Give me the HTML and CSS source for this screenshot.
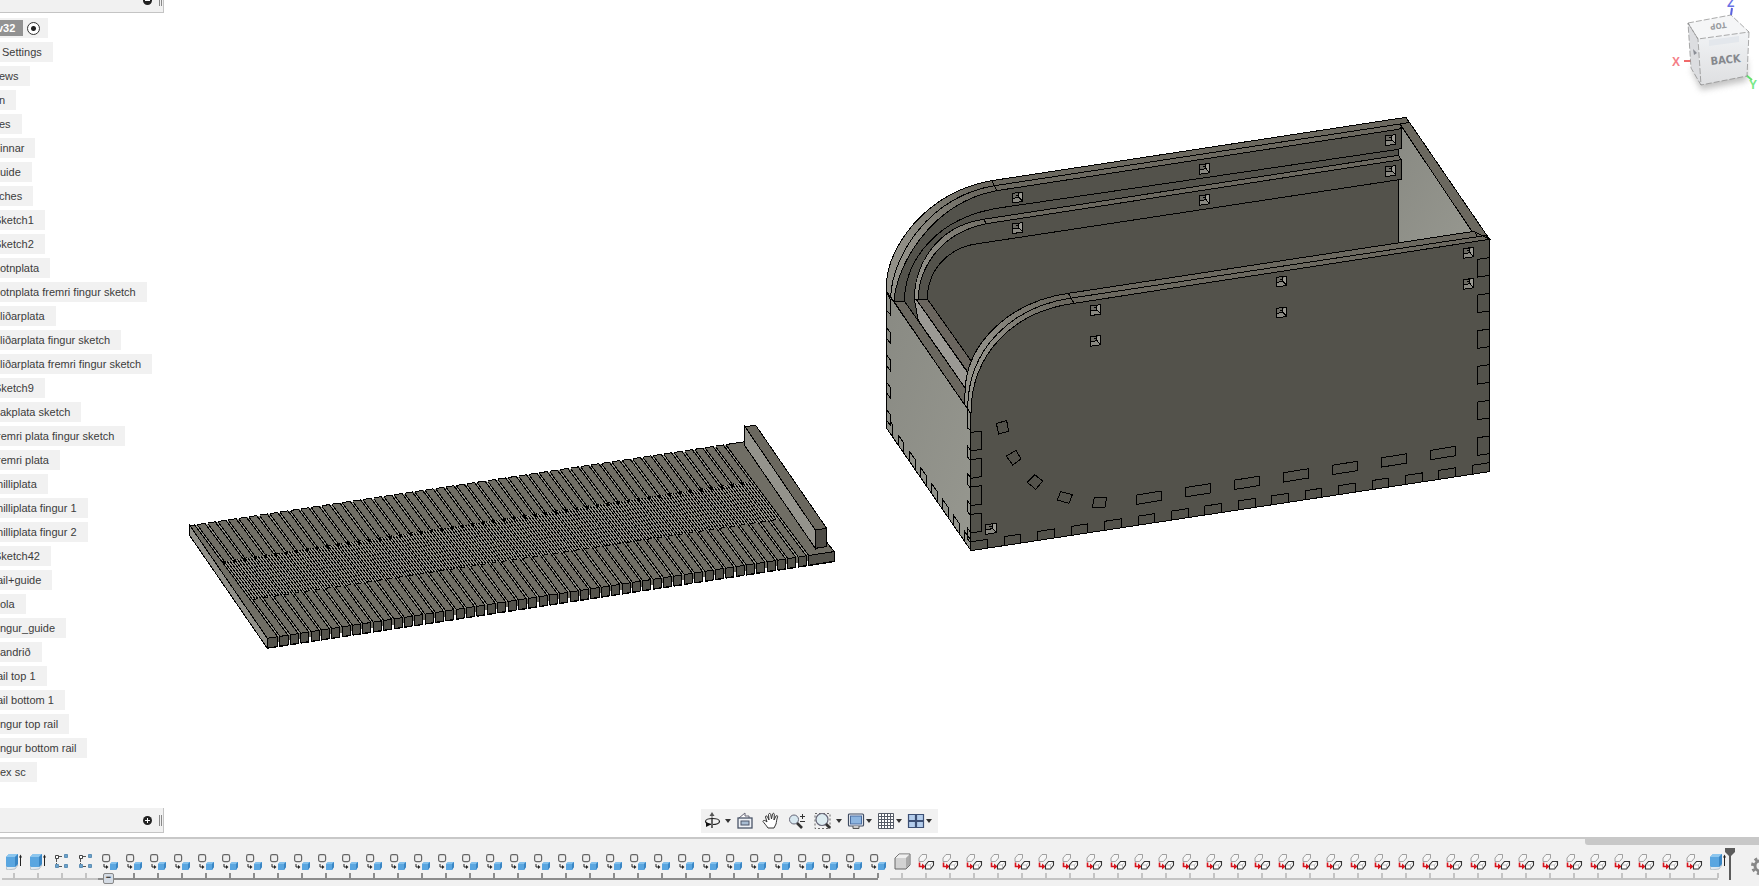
FILE: index.html
```html
<!DOCTYPE html>
<html lang="is">
<head>
<meta charset="utf-8">
<title>v32</title>
<link rel="stylesheet" href="styles.css">
</head>
<body>
<svg class="defs" aria-hidden="true">
  <defs>
    <symbol id="extrude" viewBox="0 0 17 17">
      <path d="M0 14 3 12H12L9 16 1 17Z" fill="#dfe9f0" stroke="#9aa4ac" stroke-width=".6"/>
      <path d="M0 4 3 1H12V11L9 14H1L0 13Z" fill="#5aa6e0"/>
      <path d="M0 4 3 1H12L9 4Z" fill="#8cc6ee"/>
      <path d="M9 4 12 1V11L9 14Z" fill="#3a86c4"/>
      <path d="M14.500 13V3" stroke="#222" fill="none"/><path d="M13 4.500 14.500 1.500 16 4.500Z" fill="#222"/>
    </symbol>
    <symbol id="pattern" viewBox="0 0 17 17">
      <path d="M5 3.500H9M5 13.500H9M2.500 6V11" stroke="#555" stroke-dasharray="3 1" fill="none"/>
      <path d="M1.500 2.500h3v3h-3z" fill="#fff" stroke="#444"/>
      <path d="M10.500 1.500h3v3h-3zM1.500 11.500h3v3h-3zM10.500 11.500h3v3h-3z" fill="#6aa3cc" stroke="#5f8fb5"/>
    </symbol>
    <symbol id="copy" viewBox="0 0 17 17">
      <rect x=".6" y="1.600" width="7" height="7" rx="1.800" fill="#eee" stroke="#666" stroke-width="1.200"/>
      <path d="M2 11V14H5" stroke="#222" fill="none"/><path d="M4 12 6.500 14 4 16Z" fill="#222"/>
      <path d="M8 11 10 9H16V14L14 17H8Z" fill="#5aa6e0"/>
      <path d="M8 11 10 9H16L14 11Z" fill="#82c0ec"/><path d="M14 11 16 9V14L14 17Z" fill="#3a86c4"/>
    </symbol>
    <symbol id="body" viewBox="0 0 17 17">
      <path d="M1 5 5 1H16V12L12 16H1Z" fill="#d2d2d2" stroke="#666" stroke-linejoin="round"/>
      <path d="M1.500 5 5 1.500H15.500L12 5Z" fill="#efefef"/><path d="M12 5 15.500 1.500V12L12 15.500Z" fill="#aaa"/>
    </symbol>
    <symbol id="move" viewBox="0 0 17 17">
      <path d="M1 5 4 1.500H8.500V5L5.500 8.500H1Z" fill="#f6f6f6" stroke="#8a8a8a" stroke-width=".8"/>
      <path d="M1.500 9.500V13.500H5" stroke="#d8141c" stroke-width="1.600" fill="none"/><path d="M4 10.500 7.500 13.500 4 16.500Z" fill="#d8141c"/>
      <path d="M7.500 12 10.500 8.500H15.500V12L12.500 16H7.500Z" fill="#fff" stroke="#333" stroke-width="1.100"/>
      <path d="M8 12H12.500V15.500M12.500 12 15 9" fill="none" stroke="#999" stroke-width=".6"/>
    </symbol>
  </defs>
</svg>

<main class="workspace">
  <svg class="scene" viewBox="0 0 1759 837" role="img" aria-label="Model">
    <defs>
      <linearGradient id="rim" gradientUnits="userSpaceOnUse" x1="50" y1="540" x2="330" y2="280"><stop offset="0" stop-color="#93928a"/><stop offset=".35" stop-color="#8e8c84"/><stop offset="1" stop-color="#6b685f"/></linearGradient>
      <linearGradient id="rim2" gradientUnits="userSpaceOnUse" x1="285" y1="900" x2="560" y2="600"><stop offset="0" stop-color="#93928a"/><stop offset=".45" stop-color="#8e8c84"/><stop offset="1" stop-color="#6b685f"/></linearGradient>
      <linearGradient id="side" x1="0" y1="0" x2="1" y2="1"><stop offset="0" stop-color="#898a83"/><stop offset="1" stop-color="#96978f"/></linearGradient>
      <g id="hole" class="solid">
        <path class="plain" d="M0 4 32 0V28L0 33Z" fill="#6b6a63"/>
        <path class="plain" d="M20 17 32 28V0L22 2Z" fill="#9c9b94"/>
        <path class="plain" d="M1 20 20 17 31 28 1 32Z" fill="#8a8982"/>
        <path fill="none" d="M0 4 32 0V28L0 33ZM1 19 20 16V3M20 16 31 28M10 10H20"/>
      </g>
    </defs>
    <g id="board" class="solid" transform="translate(180 410) scale(.33333)"></g>
    <g id="box" class="solid" transform="translate(870 100) scale(.33333)">
      <path fill="#53524b" d="M50 985V548C52 450 160 278 365 242L1608 52 1858 417V1115L303 1352Z"/>
      <path fill="url(#rim)" d="M50 575V548C52 450 160 278 365 242L1608 52 1616 68 1585 88 380 272C180 310 78 500 72 605Z"/>
      <path fill="none" d="M62 592C66 470 175 290 374 257L1616 68M365 242 380 272"/>
      <path fill="none" d="M72 605 103 603C105 490 190 350 400 322L1585 148M1594 87V145L1585 148V166"/>
      <path fill="url(#rim)" d="M133 598C133 500 195 380 340 358L1585 166 1594 179 350 371C205 400 145 510 145 600Z"/>
      <path fill="none" d="M340 358 350 371M172 598C172 510 235 440 330 430L1594 238V179"/>
      <path fill="url(#side)" d="M1594 87 1596 80 1812 398 1585 431V240L1594 238V179L1585 166V148L1594 145Z"/>
      <path fill="#6b685f" d="M1608 52 1858 417 1845 406 1815 408 1590 72 1616 68Z"/>
      <path fill="#6a675f" d="M72 605 103 603 288 868 290 925Z"/>
      <path fill="#9b9994" d="M133 598 145 662 288 868 303 832 140 600Z"/>
      <path fill="#6b665f" d="M140 600 172 597 312 795 303 830Z"/>
      <path fill="url(#side)" d="M50 575 303 942V1352L50 985Z"/>
      <path fill="url(#rim2)" d="M285 915V880C285 730 420 605 595 580L1812 394 1858 418 612 610C430 635 303 760 303 942Z"/>
      <path fill="#53524b" d="M303 942C303 760 430 635 612 610L1858 418V1115L303 1352Z"/>
      <path fill="none" d="M293 928C293 745 425 620 605 594L1850 406M595 580 612 610M1815 395 1822 410"/>
      <path fill="none" d="M379 970 410 962 416 994 386 1002ZM409 1068 438 1051 453 1077 428 1095ZM472 1147 494 1124 518 1143 497 1168ZM572 1175 607 1184 597 1210 562 1200ZM673 1192 710 1192 705 1222 667 1222Z"/>
      <path fill="none" d="M50 576 62 600V645L50 632M292 930V985L303 990M303 1325 353 1318V1344"/>
    </g>
  </svg>

  <aside class="browser">
    <header class="panel-bar panel-head">
      <button class="round" aria-label="Collapse"><svg viewBox="0 0 9 9"><circle cx="4.500" cy="4.500" r="4.500" fill="#222"/><path d="M2 4.500H7" stroke="#fff"/></svg></button><span class="grip"></span>
    </header>
    <ul class="tree">
      <li class="root"><b>v32</b><label><input type="radio" checked aria-label="v32"></label></li>
      <li class="in">Settings</li>
      <li class="cut">ews</li>
      <li class="cut">n</li>
      <li class="cut">es</li>
      <li>innar</li>
      <li>uide</li>
      <li class="cut">ches</li>
      <li class="deep">Sketch1</li>
      <li class="deep">Sketch2</li>
      <li>otnplata</li>
      <li>otnplata fremri fingur sketch</li>
      <li>liðarplata</li>
      <li>liðarplata fingur sketch</li>
      <li>liðarplata fremri fingur sketch</li>
      <li class="deep">Sketch9</li>
      <li>akplata sketch</li>
      <li class="mid">remri plata fingur sketch</li>
      <li class="mid">remri plata</li>
      <li class="deep">milliplata</li>
      <li class="deep">milliplata fingur 1</li>
      <li class="deep">milliplata fingur 2</li>
      <li class="deep">Sketch42</li>
      <li class="mid">ail+guide</li>
      <li>ola</li>
      <li>ngur_guide</li>
      <li>andrið</li>
      <li class="mid">ail top 1</li>
      <li class="mid">ail bottom 1</li>
      <li>ngur top rail</li>
      <li>ngur bottom rail</li>
      <li>ex sc</li>
    </ul>
    <footer class="panel-bar panel-foot">
      <button class="round" aria-label="Expand"><svg viewBox="0 0 9 9"><circle cx="4.500" cy="4.500" r="4.500" fill="#222"/><path d="M2 4.500H7M4.500 2V7" stroke="#fff"/></svg></button><span class="grip"></span>
    </footer>
  </aside>

  <svg class="cube" viewBox="0 0 100 100" role="img" aria-label="View cube">
    <defs><filter id="soft" x="-30%" y="-30%" width="160%" height="160%"><feGaussianBlur stdDeviation="3"/></filter>
    <linearGradient id="face" x1="0" y1="0" x2="0" y2="1"><stop offset="0" stop-color="#f1f3f5"/><stop offset="1" stop-color="#dedfe1"/></linearGradient></defs>
    <path d="M32 68 42 90 88 81 88 60Z" fill="#999" opacity=".6" filter="url(#soft)"/>
    <path d="M72 15 73 8" stroke="#5a62e0" stroke-width="2"/><path d="M25 61H33" stroke="#f06a6a" stroke-width="2"/><path d="M87 75 93 80" stroke="#60e070" stroke-width="2"/>
    <path d="M29 23 39 39 42 85 32 68Z" fill="#dcdde0"/><path d="M29 23 72 15 90 32 39 39Z" fill="#f5f6f7"/>
    <path d="M39 39 90 32 88 76 42 85Z" fill="url(#face)"/><path d="M50 40 80 36V42L50 46Z" fill="#e3e7ec"/>
    <path d="M29 23 39 39 42 85 32 68ZM29 23 72 15 90 32 39 39ZM90 32 88 76 42 85" fill="none" stroke="#888" stroke-width=".7" stroke-dasharray="6 2"/>
    <path d="M34 49 38 53 35 55Z" fill="#8a8d95"/>
    <text class="face-name" x="52" y="65" transform="rotate(-6 52 65)">BACK</text>
    <text class="top-name" x="67" y="22" transform="rotate(172 67 22)">TOP</text>
    <text class="axis axis-x" x="13" y="66">X</text><text class="axis axis-y" x="90" y="89">Y</text><text class="axis axis-z" x="68" y="7">Z</text>
  </svg>

  <nav class="views" aria-label="View">
    <div class="tool caret-gap"><button aria-label="Orbit"><svg viewBox="0 0 18 18"><path d="M9 16V3" stroke="#666"/><path d="M6.500 4 9 0 11.500 4Z" fill="#555"/><ellipse cx="9.500" cy="9.500" rx="7" ry="3" fill="none" stroke="#222" stroke-width="1.200"/><path d="M8 12.500 3 10V15Z" fill="#111"/><path d="M9 7V16" stroke="#666" stroke-width="2"/></svg></button><button class="more" aria-label="Orbit options"></button></div>
    <div class="tool"><button class="solo" aria-label="Look at"><svg viewBox="0 0 18 18"><path d="M3 6 9 1V4H13V6" fill="#fff" stroke="#667"/><rect x="2" y="6" width="14" height="10" fill="#eef1f6" stroke="#4b5568" stroke-width="1.300"/><rect x="5" y="9" width="8" height="4" fill="#a8bcd2" stroke="#4b5568"/></svg></button></div>
    <div class="tool"><button class="solo" aria-label="Pan"><svg viewBox="0 0 18 18"><path d="M6 16C4 13 2 11 1 9.500 1 8 3 8 5 10L3.500 5C3.500 3.500 5 3.500 5.500 5L7 8 6.500 2.500C7 1 8.500 1.200 8.700 2.500L9.500 7 10.500 2C11 .8 12.500 1.200 12.300 2.600L12 8 14 4C15 3 16 4 15.500 5 14.500 8 14.500 10 14 12L12 16Z" fill="#fff" stroke="#333"/></svg></button></div>
    <div class="tool"><button class="solo" aria-label="Zoom"><svg viewBox="0 0 18 18"><circle cx="6" cy="7.500" r="4.500" fill="#d8e8f0" stroke="#667"/><path d="M9 11 14 16" stroke="#333" stroke-width="2.600"/><path d="M12 4.500H17M14.500 2V7M12 9.500H17" stroke="#333"/></svg></button></div>
    <div class="tool caret-gap"><button aria-label="Fit"><svg viewBox="0 0 18 18"><rect x="1" y="1.500" width="15" height="15" fill="none" stroke="#666" stroke-dasharray="2 2"/><circle cx="8" cy="7.500" r="6" fill="#dcebf0" stroke="#667" stroke-width="1.200"/><path d="M12 12 16 16" stroke="#333" stroke-width="2.800"/></svg></button><button class="more" aria-label="Fit options"></button></div>
    <div class="tool"><button aria-label="Display settings"><svg viewBox="0 0 18 18"><rect x="1.500" y="2" width="15" height="12" rx="1" fill="#f2f5fa" stroke="#3f4b60" stroke-width="1.200"/><rect x="3.500" y="4" width="11" height="8" fill="#8db5e0" stroke="#4a6da0"/><path d="M6 14V16.500H12V14" fill="#ccc" stroke="#555"/></svg></button><button class="more" aria-label="Display options"></button></div>
    <div class="tool"><button aria-label="Grid"><svg viewBox="0 0 18 18"><path d="M1.500 1.500H16.500V16.500H1.500ZM4.500 1.500V16.500M7.500 1.500V16.500M10.500 1.500V16.500M13.500 1.500V16.500M1.500 4.500H16.500M1.500 7.500H16.500M1.500 10.500H16.500M1.500 13.500H16.500" fill="#fff" stroke="#555b66"/></svg></button><button class="more" aria-label="Grid options"></button></div>
    <div class="tool"><button aria-label="Viewports"><svg viewBox="0 0 18 18"><path d="M1.500 2.500h7v6h-7zM9.500 2.500h7v6h-7zM1.500 9.500h7v6h-7zM9.500 9.500h7v6h-7z" fill="#b4cdec" stroke="#3c4f74" stroke-width="1.200"/></svg></button><button class="more" aria-label="Viewport options"></button></div>
  </nav>
</main>

<footer class="timeline">
  <div class="scroll-thumb"></div>
  <ol class="history" id="history"></ol>
</footer>
<script src="scene.js"></script>
</body>
</html>
```
FILE: styles.css
```css
* { box-sizing: border-box; }

body {
  margin: 0;
  height: 100vh;
  display: flex;
  flex-direction: column;
  overflow: hidden;
  background: #fff;
  color: #3c3c3c;
  font: 11px/20px "Liberation Sans", Arial, sans-serif;
}

button {
  appearance: none;
  border: 0;
  padding: 0;
  background: none;
  display: block;
  flex: none;
}

svg { display: block; }
.defs { position: absolute; width: 0; height: 0; }

.workspace {
  position: relative;
  flex: 1;
  min-height: 0;
  display: flex;
  justify-content: space-between;
}

.scene {
  position: absolute;
  inset: 0;
  width: 100%;
  height: 100%;
}

.solid path {
  stroke: #000;
  stroke-width: 1px;
  vector-effect: non-scaling-stroke;
  shape-rendering: crispEdges;
}
.solid .plain { stroke: none; }

.browser {
  position: relative;
  width: 164px;
  display: flex;
  flex-direction: column;
  padding-bottom: 4px;
}

.panel-bar {
  display: flex;
  align-items: center;
  justify-content: flex-end;
  gap: 7px;
  padding-right: 1px;
  background: #f1f1f1;
  border: solid #c4c4c4;
  border-width: 0 1px 1px 0;
}
.panel-head { height: 13px; align-items: flex-start; overflow: hidden; }
.panel-head .round { margin-top: -4px; }
.panel-head .grip { height: 6px; }
.panel-foot { height: 25px; margin-top: auto; }
.round { width: 9px; height: 9px; }
.grip { width: 3px; height: 11px; border: solid #888; border-width: 0 1px; }

.tree {
  list-style: none;
  margin: 0;
  padding: 5px 0 0;
  display: flex;
  flex-direction: column;
  align-items: flex-start;
  gap: 4px;
}
.tree li {
  height: 20px;
  padding-right: 11px;
  background: #f1f1f1;
  white-space: nowrap;
}
.tree .in { text-indent: 2px; }
.tree .cut { text-indent: -1px; }
.tree .mid { text-indent: -3px; }
.tree .deep { text-indent: -6px; }
.tree .root { display: flex; align-items: center; gap: 4px; padding-right: 8px; text-indent: -3px; }
.root b { background: #929292; color: #fff; line-height: 16px; padding-right: 8px; }
.root label { display: flex; }
.root input {
  appearance: none;
  margin: 0;
  width: 13px;
  height: 13px;
  border: 1px solid #333;
  border-radius: 50%;
  background: radial-gradient(circle, #222 2px, #fff 3px);
}

.cube { position: relative; width: 100px; height: 100px; overflow: hidden; }
.face-name { font: bold 11px "Liberation Sans Narrow", "DejaVu Sans Condensed", sans-serif; fill: #85888d; }
.top-name { font: bold 8px "Liberation Sans Narrow", "DejaVu Sans Condensed", sans-serif; fill: #9a9da2; }
.axis { font: bold 12px "Liberation Sans", sans-serif; }
.axis-x { fill: #f58088; }
.axis-y { fill: #78e888; }
.axis-z { fill: #6a72e4; }

.views {
  position: absolute;
  bottom: 4px;
  left: 0;
  right: 121px;
  width: max-content;
  margin: 0 auto;
  height: 24px;
  padding: 0 5px 0 2px;
  display: flex;
  align-items: center;
  gap: 4px;
  background: #f1f1f1;
}
.tool { display: flex; align-items: center; }
.tool svg { width: 18px; height: 18px; }
.solo { padding-right: 4px; }
.caret-gap { gap: 3px; }
.more { width: 8px; height: 18px; display: flex; align-items: center; justify-content: center; }
.more::before { content: ""; border: 3px solid transparent; border-top: 4px solid #333; border-bottom: 0; }

.timeline {
  flex: none;
  height: 49px;
  border-top: 2px solid #c8c8c8;
  background: #f1f1f1;
  overflow: hidden;
}
.scroll-thumb { width: 174px; max-width: 20%; height: 6px; margin-left: auto; background: #c8c8c8; border-bottom-left-radius: 3px; }

.history { list-style: none; display: flex; margin: 0; padding: 8px 0 0 2px; }
.step {
  --rail: #c4c4c4;
  flex: none;
  width: 24px;
  height: 27px;
  display: flex;
  flex-direction: column;
  align-items: center;
  gap: 3px;
  background: linear-gradient(var(--rail), var(--rail)) left bottom / 100% 2px no-repeat;
}
.step svg { width: 17px; height: 17px; }
.step::after { content: ""; width: 2px; height: 5px; background: var(--rail); }
.step.grouped { --rail: #8c8c8c; }
.step.end { background-size: 50% 2px; }
.step.toggle::after { content: "−"; width: 9px; height: 9px; flex: none; margin-right: 3px; border: 1px solid #888; border-radius: 2px; background: #d4dbe4; color: #111; font: bold 9px/7px "Liberation Sans", sans-serif; text-align: center; }
.marker { flex: none; width: 12px; height: 33px; margin: -6px 0 0 -6px; position: relative; }
.gear { margin: 4px 0 0 15px; }
.gear svg { width: 18px; height: 18px; }
```
FILE: scene.js
```js
const SVG = 'http://www.w3.org/2000/svg';
const board = document.getElementById('board');
const box = document.getElementById('box');

function draw(parent, d, fill = 'none', cls) {
  const p = document.createElementNS(SVG, 'path');
  p.setAttribute('d', d);
  p.setAttribute('fill', fill);
  if (cls) p.setAttribute('class', cls);
  parent.append(p);
}

/* Slatted lid */
const SLATS = 52, PITCH = 31.1;
const back = x => 347 - (x - 30) * 0.1514;
const front = x => 685 - (x - 262) * 0.153;
const along = (i, off, t) => {
  const bx = 44 + PITCH * i + off, fx = 293 + PITCH * i + off;
  const by = back(bx), fy = front(fx);
  return `${bx + (fx - bx) * t} ${by + (fy - by) * t}`;
};
draw(board, 'M30 347 1695 95 1963 425V455L262 715 30 378Z', '#706e65');
draw(board, 'M30 347 262 685V715L30 378Z', '#92918a');
for (let i = 0; i < SLATS; i++) {
  draw(board, `M${along(i, 1, 0)}L${along(i, 7, 0)} ${along(i, 7, 1)} ${along(i, 1, 1)}Z`, '#96958d', 'plain');
  if (i < SLATS - 1) draw(board, `M${along(i, 7, .33)}L${along(i, PITCH, .33)} ${along(i, PITCH, .67)} ${along(i, 7, .67)}Z`, '#96948c', 'plain');
}
for (let i = 0; i < SLATS; i++) {
  draw(board, `M${along(i, 0, 0)}L${along(i, 0, 1)}M${along(i, 7, 0)}L${along(i, 7, 1)}`);
  if (i < SLATS - 1) {
    for (const off of [15, 23]) draw(board, `M${along(i, off, .33)}L${along(i, off, .67)}`);
    draw(board, `M${along(i, 0, .33)}l10 -2 -3 10Z`, '#000');
    draw(board, `M${along(i, 8, .67)}L${along(i, 22, .67)}`);
  }
  draw(board, `M${along(i, 1, 0)}v-5l7 -1v8Z`, '#fff', 'plain');
  draw(board, `M${along(i, 0, 0)}l5 8`);
  const x = 293 + PITCH * i;
  draw(board, `M${x} ${front(x) + 16}h7v16h-7Z`, '#fff', 'plain');
}
for (let i = 0; i <= SLATS; i++) {
  const x = i ? 300 + PITCH * (i - 1) : 262;
  const end = i === SLATS ? 1963 : 293 + PITCH * i;
  draw(board, `M${x} ${front(x)}L${end} ${front(end)}v29L${x} ${front(x) + 29}Z`, '#54534c');
}
draw(board, 'M1695 50 1906 360V415L1695 108Z', '#94938c');
draw(board, 'M1695 50 1727 46 1940 355 1906 360Z', '#6b685f');
draw(board, 'M1906 360 1940 355V410L1906 415Z', '#4e4c46');

/* Finger joints on the box */
const edge = x => 1352 - (x - 303) * 0.1524;
for (let k = 0; k < 15; k++) {
  const x = 403 + 100.3 * k;
  draw(box, `M${x} ${edge(x)}v-27L${x + 50} ${edge(x + 50) - 27}v27`);
}
for (let k = 0; k < 7; k++) {
  const x = 800 + 146.8 * k, y = 1185 - 22.3 * k;
  draw(box, `M${x} ${y}l75 -12v28l-75 12Z`);
}
for (let k = 0; k < 6; k++) draw(box, `M1858 ${473 + 107 * k}l-34 5v53l34 -5`);
for (let k = 0; k < 4; k++) {
  draw(box, `M303 ${997 + 82 * k}l32 -4v55l-32 5`);
  draw(box, `M303 ${1052 + 82 * k}l-11 -14v32l11 14`);
  draw(box, `M50 ${683 + 82 * k}l12 16v32l-12 -16`);
}
draw(box, 'M62 965 68 975V1010');
for (let k = 0; k < 7; k++) {
  const x = 85 + 33.2 * k, y = 985 + (x - 50) * 1.451;
  draw(box, `M${x} ${y}v-30l17 24v30`);
}

[[427, 276], [427, 368], [661, 614], [661, 706], [348, 1270], [988, 190], [988, 283],
 [1546, 104], [1546, 197], [1780, 442], [1780, 535], [1219, 528], [1219, 621]].forEach(([x, y]) => {
  const u = document.createElementNS(SVG, 'use');
  u.setAttribute('href', '#hole');
  u.setAttribute('x', x);
  u.setAttribute('y', y);
  box.append(u);
});

/* Feature history */
const steps = [
  ...Array(2).fill('extrude'), ...Array(2).fill('pattern'), ...Array(33).fill('copy'),
  'body', ...Array(33).fill('move'), 'extrude'
];
const list = document.getElementById('history');
list.innerHTML = steps.map((kind, i) => {
  const cls = ['step'];
  if (kind === 'copy') cls.push('grouped');
  if (i === 4) cls.push('toggle');
  if (i === 36 || i === steps.length - 1) cls.push('end');
  return `<li class="${cls.join(' ')}"><button aria-label="${kind} ${i + 1}"><svg><use href="#${kind}"/></svg></button></li>`;
}).join('') +
`<li class="marker"><svg width="12" height="33"><path d="M1 1H11V5L7 9V33H5V9L1 5Z" fill="#5c5c5c"/></svg></li>
<li class="gear"><button aria-label="Settings"><svg viewBox="0 0 18 18"><circle cx="9" cy="9" r="5" fill="none" stroke="#888" stroke-width="3"/><circle cx="9" cy="9" r="7.500" fill="none" stroke="#888" stroke-width="3" stroke-dasharray="3 2.890"/></svg></button></li>`;
```
